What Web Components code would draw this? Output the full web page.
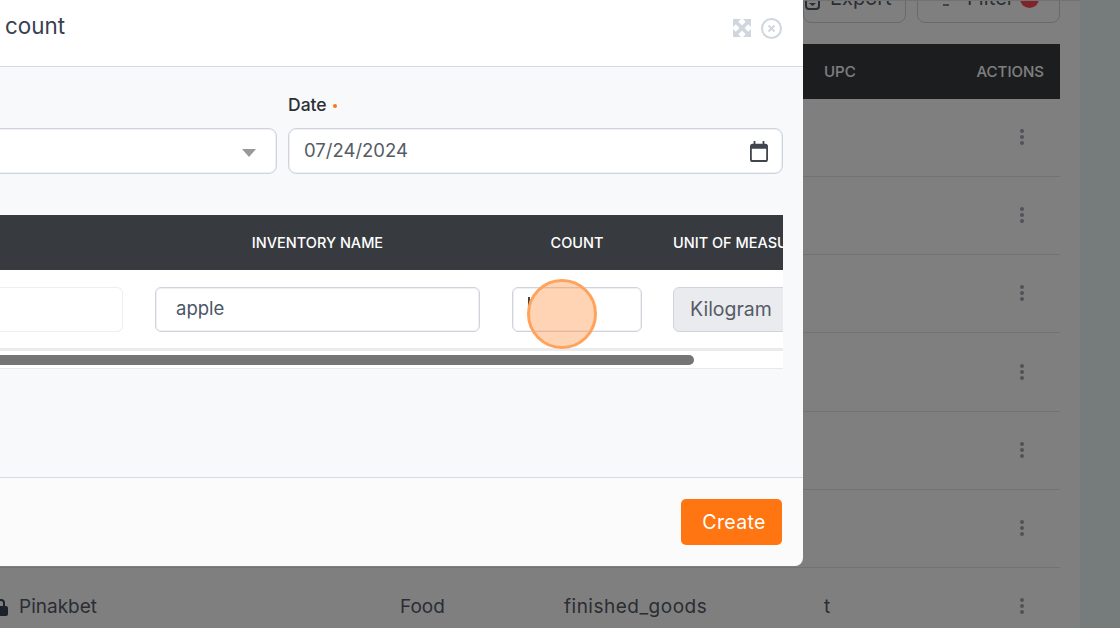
<!DOCTYPE html>
<html>
<head>
<meta charset="utf-8">
<title>Inventory count</title>
<style>
  html, body { margin: 0; padding: 0; height: 100%; overflow: hidden; }
  body { font-family: Inter, "Liberation Sans", sans-serif; }
</style>
</head>
<body>
<stock-page>
  <bg-toolbar slot="main"></bg-toolbar>
  <bg-table slot="main">
    <bg-row></bg-row>
    <bg-row></bg-row>
    <bg-row></bg-row>
    <bg-row></bg-row>
    <bg-row></bg-row>
    <bg-row></bg-row>
    <bg-row name="Pinakbet" category="Food" kind="finished_goods" upc="t"></bg-row>
  </bg-table>
  <count-modal slot="modal">
    <count-form></count-form>
    <count-table></count-table>
  </count-modal>
  <tap-marker slot="marker"></tap-marker>
</stock-page>

<script>
const FONT = 'Inter, "Liberation Sans", sans-serif';

window.customElements.define(
  "stock-page",
  class extends HTMLElement {
    constructor() {
      super();
      const root = this.attachShadow({ mode: "open" });
      root.innerHTML = `
    <style>
      :host {
        position: relative;
        display: grid;
        grid-template-columns: 1080px 40px;
        width: 1120px;
        height: 628px;
        overflow: hidden;
        background: #edf6f8;
        font-family: ${FONT};
      }
      .main {
        display: flex;
        flex-direction: column;
        background: #fff;
        overflow: hidden;
        height: 628px;
      }
      .overlay {
        position: absolute;
        inset: 0;
        background: rgba(0, 0, 0, 0.5);
      }
    </style>
    <div class="main"><slot name="main"></slot></div>
    <div></div>
    <div class="overlay"></div>
    <slot name="modal"></slot>
    <slot name="marker"></slot>
    `;
    }
  }
);

window.customElements.define(
  "bg-toolbar",
  class extends HTMLElement {
    constructor() {
      super();
      const root = this.attachShadow({ mode: "open" });
      root.innerHTML = `
    <style>
      :host {
        box-sizing: border-box;
        display: flex;
        justify-content: flex-end;
        align-items: flex-end;
        gap: 11px;
        height: 23px;
        padding: 0 20px 0 0;
        margin-bottom: 21px;
        overflow: hidden;
        flex: none;
        border-top: 1px solid #e2e4e8;
      }
      .btn {
        box-sizing: border-box;
        display: flex;
        align-items: flex-end;
        height: 40px;
        border: 1px solid #cfd2d6;
        border-radius: 8px;
        color: #555b66;
        font-size: 20px;
        line-height: 24px;
        padding-bottom: 12px;
        position: relative;
      }
      .export { width: 103px; padding-left: 26px; }
      .filter { width: 143px; padding-left: 49px; }
      svg { position: absolute; }
      .badge {
        position: absolute;
        left: 102px;
        top: 12px;
        width: 19px;
        height: 12px;
        border-radius: 0 0 10px 10px;
        background: #ff4b55;
      }
    </style>
    <div class="btn export">
      <svg style="left:-1px;top:10px" width="18" height="18" viewBox="0 0 18 18"><path fill="none" stroke="#555b66" stroke-width="2" d="M3 1v11a3 3 0 0 0 3 3h7a3 3 0 0 0 3-3V1"/><path fill="#555b66" d="M6 9h7l-3.5 3z"/></svg>
      Export
    </div>
    <div class="btn filter">
      <svg style="left:25px;top:18px" width="6" height="8" viewBox="0 0 6 8"><path fill="#888" d="M0 2h6v2H0z"/></svg>
      Filter
      <span class="badge"></span>
    </div>
    `;
    }
  }
);

window.customElements.define(
  "bg-table",
  class extends HTMLElement {
    constructor() {
      super();
      const root = this.attachShadow({ mode: "open" });
      root.innerHTML = `
    <style>
      :host {
        display: block;
        width: 1060px;
        flex: none;
      }
      .head {
        display: grid;
        grid-template-columns: 824px 1fr 100px;
        align-items: center;
        height: 55px;
        background: #373b3f;
        color: #fff;
        font-size: 15px;
        font-weight: 500;
      }
      .actions { text-align: right; padding-right: 16px; }
    </style>
    <div class="head"><span></span><span>UPC</span><span class="actions">ACTIONS</span></div>
    <slot></slot>
    `;
    }
  }
);

window.customElements.define(
  "bg-row",
  class extends HTMLElement {
    constructor() {
      super();
      const root = this.attachShadow({ mode: "open" });
      const name = this.getAttribute("name");
      const lock = name
        ? `<svg class="lock" width="18" height="18" viewBox="0 0 18 18"><path fill="#3a4352" d="M3 8h1V5a4 4 0 0 1 8 0v3h1a2 2 0 0 1 2 2v6a2 2 0 0 1-2 2H3a2 2 0 0 1-2-2v-6a2 2 0 0 1 2-2zm3 0h4V5a2 2 0 0 0-4 0z"/></svg>`
        : "";
      root.innerHTML = `
    <style>
      :host {
        box-sizing: border-box;
        display: grid;
        grid-template-columns: 400px 164px 260px 1fr 76px;
        align-items: center;
        height: 78.17px;
        padding-bottom: 1px;
        border-bottom: 1px solid #e2e4e8;
        color: #555b66;
        font-size: 19px;
      }
      .name { position: relative; padding-left: 19px; }
      .lock { position: absolute; left: -7px; top: 3px; }
      .kind { letter-spacing: 0.5px; }
      .dots { display: flex; flex-direction: column; align-items: center; gap: 2px; }
      .dots i { width: 4px; height: 4px; border-radius: 50%; background: #a0a4ae; }
    </style>
    <span class="name">${lock}${name || ""}</span>
    <span>${this.getAttribute("category") || ""}</span>
    <span class="kind">${this.getAttribute("kind") || ""}</span>
    <span>${this.getAttribute("upc") || ""}</span>
    <span class="dots"><i></i><i></i><i></i></span>
    `;
    }
  }
);

window.customElements.define(
  "count-modal",
  class extends HTMLElement {
    constructor() {
      super();
      const root = this.attachShadow({ mode: "open" });
      root.innerHTML = `
    <style>
      :host {
        position: absolute;
        left: 0;
        top: 0;
        width: 803px;
        height: 566px;
        display: grid;
        grid-template-rows: 67px 411px 88px;
        overflow: hidden;
        border-radius: 0 0 8px 0;
        background: #fbfbfb;
      }
      header {
        box-sizing: border-box;
        display: flex;
        align-items: center;
        background: #fff;
        border-bottom: 1px solid #d5dae3;
        padding: 0 21px 16px 5px;
        color: #374151;
        font-size: 22.4px;
      }
      h1 { margin: 0; flex: 1; font: inherit; }
      header .icons { display: flex; align-items: center; gap: 10px; padding-top: 6px; }
      .body {
        box-sizing: border-box;
        background: #f8f9fb;
        border-bottom: 1px solid #d5dae3;
        padding-top: 28px;
      }
      footer {
        display: flex;
        justify-content: flex-end;
        align-items: center;
        padding-right: 21px;
      }
      button {
        width: 101px;
        height: 46px;
        padding: 0 0 0 5px;
        border: 0;
        border-radius: 5px;
        background: #ff7512;
        color: #fff;
        font: inherit;
        font-size: 19.5px;
        letter-spacing: 0.35px;
      }
    </style>
    <header>
      <h1>count</h1>
      <div class="icons">
        <svg width="18" height="18" viewBox="0 0 18 18"><g fill="#d0d6dd"><path d="M0 0h8L0 8zM18 0v8l-8-8zM0 18v-8l8 8zM18 18h-8l8-8z"/></g><path stroke="#d0d6dd" stroke-width="3.6" d="M2 2l14 14M16 2L2 16"/></svg>
        <svg width="21" height="21" viewBox="0 0 21 21"><circle cx="10.5" cy="10.5" r="9.5" fill="none" stroke="#d0d6dd" stroke-width="2"/><path stroke="#d0d6dd" stroke-width="1.8" d="M7.5 7.5l6 6M13.5 7.5l-6 6"/></svg>
      </div>
    </header>
    <div class="body"><slot></slot></div>
    <footer><button>Create</button></footer>
    `;
    }
  }
);

window.customElements.define(
  "count-form",
  class extends HTMLElement {
    constructor() {
      super();
      const root = this.attachShadow({ mode: "open" });
      root.innerHTML = `
    <style>
      :host {
        display: grid;
        grid-template-columns: 287px 1fr;
        column-gap: 11px;
        margin: 0 20px 41px -10px;
      }
      .label {
        height: 20px;
        line-height: 19px;
        margin-bottom: 13px;
        color: #2b2f36;
        font-size: 17.5px;
        font-weight: 500;
      }
      .label i {
        display: inline-block;
        width: 4px;
        height: 4px;
        margin: 0 0 3px 2px;
        border-radius: 50%;
        background: #ff7512;
      }
      .box {
        box-sizing: border-box;
        display: flex;
        align-items: center;
        justify-content: space-between;
        height: 46px;
        background: #fff;
        border: 1px solid #cfd4dc;
        box-shadow: inset 0 0 0 1px #eef0f3;
        border-radius: 8px;
        padding: 0 14px 2px 15px;
        color: #555b66;
        font-size: 18.5px;
      }
      .box.select { grid-column: 1; padding: 2px 20px 0 0; justify-content: flex-end; }
      .box svg { margin-top: 2px; }
    </style>
    <div class="label"></div>
    <div class="label">Date <i></i></div>
    <div class="box select">
      <svg width="14" height="8" viewBox="0 0 14 8"><path fill="#999" d="M0 0h14L7 8z"/></svg>
    </div>
    <div class="box">
      07/24/2024
      <svg width="18" height="21" viewBox="0 0 20 22" preserveAspectRatio="none"><path fill="#3f444d" d="M4 0h2v3h8V0h2v3h1a3 3 0 0 1 3 3v13a3 3 0 0 1-3 3H3a3 3 0 0 1-3-3V6a3 3 0 0 1 3-3h1zM2 8v11a1 1 0 0 0 1 1h14a1 1 0 0 0 1-1V8z"/></svg>
    </div>
    `;
    }
  }
);

window.customElements.define(
  "count-table",
  class extends HTMLElement {
    constructor() {
      super();
      const root = this.attachShadow({ mode: "open" });
      root.innerHTML = `
    <style>
      :host {
        display: block;
        width: 783px;
        overflow: hidden;
      }
      .grid {
        display: grid;
        grid-template-columns: 139px 357px 162px 300px;
        width: 958px;
      }
      .th {
        box-sizing: border-box;
        height: 55px;
        line-height: 55px;
        background: #373b3f;
        color: #fff;
        font-size: 14.5px;
        font-weight: 500;
        text-align: center;
        white-space: nowrap;
      }
      .th.unit { text-align: left; padding-left: 15px; }
      .td {
        box-sizing: border-box;
        height: 78px;
        padding: 17px 16px;
        background: #fff;
      }
      .td.first { padding-left: 0; }
      .td.last { padding-left: 15px; }
      .input {
        box-sizing: border-box;
        position: relative;
        height: 45px;
        line-height: 40px;
        border: 1px solid #cfd4dc;
        box-shadow: inset 0 0 0 1px #eef0f3;
        border-radius: 6px;
        padding: 0 20px;
        color: #4b5565;
        font-size: 18.5px;
        background: #fff;
      }
      .input.ghost { border-color: #eceef1; box-shadow: none; border-left: 0; border-radius: 0 6px 6px 0; }
      .input.off {
        background: #e9ebef;
        box-shadow: none;
        padding-left: 16px;
        font-size: 19.5px;
        color: #555b66;
        line-height: 43px;
      }
      .caret {
        position: absolute;
        left: 15px;
        top: 9px;
        width: 2px;
        height: 25px;
        background: #444;
      }
      .rule { height: 3px; background: #ebebed; }
      .track {
        height: 18px;
        padding-top: 4px;
        box-sizing: border-box;
        background: #fff;
        border-bottom: 1px solid #e6e8ec;
      }
      .thumb {
        width: 694px;
        height: 10px;
        border-radius: 0 5px 5px 0;
        background: #757575;
      }
    </style>
    <div class="grid">
      <div class="th"></div>
      <div class="th">INVENTORY NAME</div>
      <div class="th">COUNT</div>
      <div class="th unit">UNIT OF MEASURE</div>
      <div class="td first"><div class="input ghost"></div></div>
      <div class="td"><div class="input">apple</div></div>
      <div class="td"><div class="input"><span class="caret"></span></div></div>
      <div class="td last"><div class="input off">Kilogram</div></div>
    </div>
    <div class="rule"></div>
    <div class="track"><div class="thumb"></div></div>
    `;
    }
  }
);

window.customElements.define(
  "tap-marker",
  class extends HTMLElement {
    constructor() {
      super();
      const root = this.attachShadow({ mode: "open" });
      root.innerHTML = `
    <style>
      :host {
        position: absolute;
        left: 527px;
        top: 279px;
        box-sizing: border-box;
        width: 70px;
        height: 70px;
        border: 3px solid #ffa35c;
        border-radius: 50%;
        background: rgba(255, 142, 60, 0.38);
      }
    </style>
    `;
    }
  }
);
</script>
</body>
</html>
